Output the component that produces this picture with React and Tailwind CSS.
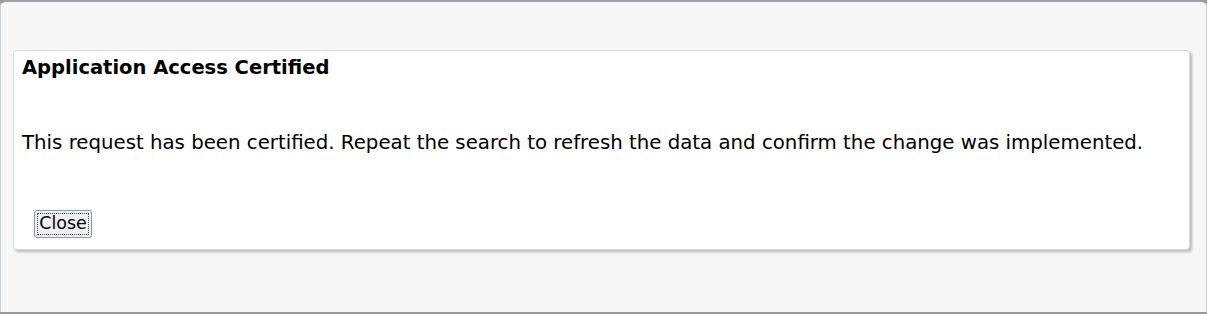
export default function App() {
  return (
    <div className="w-[1207px] h-[314px] bg-[#9a9a9a] font-['DejaVu_Sans',sans-serif] text-black">
      <div className="h-[312px] bg-[#f7f7f7] rounded-t-[6px] border border-b-0 border-[#c9ced6] border-t-[#9ba3ad] border-t-2 pt-[48px] pl-[12px] pr-[16px]">
        {/* Message panel */}
        <div className="h-[200px] bg-white border border-[#d6dbe2] rounded-[4px] shadow-[2px_2px_3px_rgba(0,0,0,0.25)] pl-[8px] pt-[5px]">
          <h2 className="text-[19.5px] font-bold leading-[24px]">Application Access Certified</h2>
          <p className="mt-[51px] text-[19.75px] leading-[24px]">
            This request has been certified. Repeat the search to refresh the data and confirm the change was implemented.
          </p>
          <div className="mt-[55px] pl-[12px]">
            <button className="h-[28px] w-[58px] bg-[#eef0f2] border border-[#7f9ab8] rounded-[3px] text-[17.5px] leading-none p-[2px]">
              <span className="flex h-full items-center justify-center border border-dotted border-[#444]">Close</span>
            </button>
          </div>
        </div>
      </div>
    </div>
  );
}
